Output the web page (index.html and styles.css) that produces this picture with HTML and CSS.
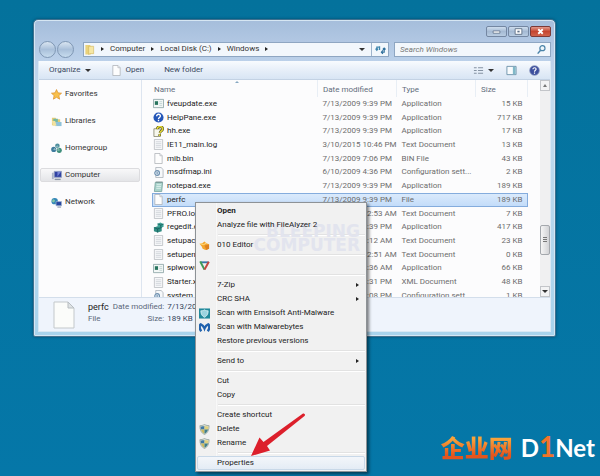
FILE: index.html
```html
<!DOCTYPE html>
<html lang="en">
<head>
    <meta charset="utf-8">
    <title>Windows</title>
    <link rel="stylesheet" href="styles.css">
</head>
<body>
    <!-- Shared icons -->
    <svg class="sprite" aria-hidden="true">
        <symbol id="i-page" viewBox="0 0 12 12"><path d="M2 .5h5.5L10 3v8.500H2z" fill="#fdfdfd" stroke="#a9adb2" stroke-width=".8"/><path d="M7.500.5V3H10" fill="#e6e9ec" stroke="#a9adb2" stroke-width=".6"/></symbol>
        <symbol id="i-text" viewBox="0 0 12 12"><path d="M1.500.5h9v11h-9z" fill="#f6f7f9" stroke="#b4b8bd" stroke-width=".8"/><path d="M3 3h6M3 5h6M3 7h6M3 9h6" stroke="#c9ced5" stroke-width=".8"/></symbol>
        <symbol id="i-ini" viewBox="0 0 12 12"><path d="M3 .5h6L11 3v8.500H3z" fill="#f6f8fa" stroke="#a3aab2" stroke-width=".8"/><circle cx="4.500" cy="6.500" r="2.600" fill="#dbe7f1" stroke="#6f91b0" stroke-width="1.200"/><circle cx="4.500" cy="6.500" r=".8" fill="#4b749a"/></symbol>
        <symbol id="i-app" viewBox="0 0 12 12"><path d="M.5 1.500h11v9H.5z" fill="#f2f7f6" stroke="#8ba3a5" stroke-width=".9"/><path d="M2 3.500h3.500v4H2z" fill="#28745e"/><path d="M7 4h3M7 6h3M7 8h3" stroke="#b7c9c9" stroke-width=".8"/></symbol>
        <symbol id="i-shield" viewBox="0 0 12 12"><path d="M6 .5c2 1.200 3.500 1.300 5 1.300 0 5-1.500 8-5 9.700C2.500 9.800 1 6.800 1 1.800c1.500 0 3-.1 5-1.300z" fill="#dfe4dc" stroke="#8b9a92" stroke-width=".8"/><path d="M6 1.800V6H2.100C1.800 5 1.800 4 1.800 2.600 3.500 2.600 4.500 2.500 6 1.800z" fill="#3f78a6"/><path d="M6 1.800V6h3.900c.3-1 .3-2 .3-3.400C8.500 2.600 7.500 2.500 6 1.800z" fill="#e0d07c"/><path d="M6 6v4.600C4 9.500 2.700 8 2.100 6z" fill="#cdb95d"/><path d="M6 6v4.600C8 9.500 9.300 8 9.900 6z" fill="#3f7e8c"/></symbol>
    </svg>

    <main class="desktop">
        <section class="window">
            <div class="titlebar">
                <button class="caption" aria-label="Minimize"><svg viewBox="0 0 8 6"><path d="M1 2.500h6v2H1z" fill="#fff" stroke="#5d6f86" stroke-width=".7"/></svg></button>
                <button class="caption" aria-label="Maximize"><svg viewBox="0 0 8 6"><path d="M1 .5h6v5H1z" fill="#fff" stroke="#5d6f86" stroke-width=".8"/><path d="M3 2.300h2v1.500H3z" fill="#5d6f86"/></svg></button>
                <button class="caption close" aria-label="Close"><svg viewBox="0 0 8 6"><path d="M2 1l4 4M6 1L2 5" stroke="#fff" stroke-width="1.600"/></svg></button>
            </div>

            <div class="navbar">
                <button class="round" aria-label="Back"></button>
                <button class="round" aria-label="Forward"></button>
                <nav class="address">
                    <svg class="icon" viewBox="0 0 12 12"><path d="M1.500 1h5l1 1.500v9h-6z" fill="#ead27a"/><path d="M5 2.500h5.500v8H6.500L5 11.500z" fill="#f6e7a4" stroke="#d0b152" stroke-width=".6"/></svg>
                    <i class="arrow"></i>
                    <a href="#">Computer</a><i class="arrow"></i>
                    <a href="#">Local Disk (C:)</a><i class="arrow"></i>
                    <a href="#">Windows</a><i class="arrow"></i>
                    <button class="history" aria-label="Previous locations"><i class="arrow down"></i></button>
                    <button class="refresh" aria-label="Refresh"><svg class="icon" viewBox="0 0 12 12"><path d="M2 6V3.500h3M5 6.500V2.500M3.500 5L2 6.800.6 5" fill="none" stroke="#3f86ad" stroke-width="1.300"/><path d="M10 5.500V9H7M8.600 7L7 9l1.600 1.800M8.500 6L10 4.500 11.500 6" fill="none" stroke="#2e6f9c" stroke-width="1.300"/></svg></button>
                </nav>
                <label class="search">
                    <input type="search" placeholder="Search Windows" aria-label="Search Windows">
                    <svg class="icon" viewBox="0 0 12 12"><circle cx="7" cy="4.500" r="2.800" fill="#eef6fb" stroke="#4a83a8" stroke-width="1.300"/><path d="M5 6.800L1.800 10.500" stroke="#4a83a8" stroke-width="1.600"/></svg>
                </label>
            </div>

            <div class="client">
                <div class="toolbar">
                    <button>Organize <i class="arrow down"></i></button>
                    <button class="open"><svg class="icon" viewBox="0 0 12 12"><use href="#i-page"/></svg>Open</button>
                    <button>New folder</button>
                    <button class="view" aria-label="Change your view"><svg class="icon" viewBox="0 0 12 12"><path d="M1 3h3M1 6h3M1 9h3M5.500 3H11M5.500 6H11M5.500 9H11" stroke="#8593a3" stroke-width="1.200"/></svg><i class="arrow down"></i></button>
                    <button aria-label="Preview pane"><svg class="icon" viewBox="0 0 12 12"><path d="M1 1.500h10v9H1z" fill="#f8fbfd" stroke="#6c93ab"/><path d="M7.500 2h3v8h-3z" fill="#80b8c8"/></svg></button>
                    <button aria-label="Help"><svg class="icon" viewBox="0 0 12 12"><circle cx="6" cy="6" r="5.300" fill="#3c4f9e" stroke="#8d99c0" stroke-width=".8"/><path d="M4.300 4.700c0-2.400 3.600-2.200 3.400 0C7.600 5.800 6 5.900 6 7.300M6 8.300v1.300" fill="none" stroke="#fff" stroke-width="1.300"/></svg></button>
                </div>

                <div class="panes">
                    <nav class="sidebar">
                        <a href="#"><svg class="icon" viewBox="0 0 12 12"><path d="M6 .6l1.600 3.600 3.900.4-2.900 2.600.8 3.900L6 9.100l-3.400 2 .8-3.900L.5 4.600l3.900-.4z" fill="#f8c04b" stroke="#dd9330" stroke-width=".8"/></svg>Favorites</a>
                        <a href="#"><svg class="icon" viewBox="0 0 12 12"><path d="M1 2h4l1 1.500h4V10H1z" fill="#e6cc75"/><path d="M2.500 3h5v4h-5z" fill="#76b8a0"/><path d="M4.500 6.500h7V11h-7z" fill="#8fc2d9"/><path d="M1 5.500h3.500L6 10.500H2z" fill="#f2e2a0"/></svg>Libraries</a>
                        <a href="#"><svg class="icon" viewBox="0 0 12 12"><circle cx="7" cy="3" r="2.500" fill="#4e8f9e"/><circle cx="3" cy="7" r="2.800" fill="#3e7b9d"/><circle cx="9" cy="8" r="2.800" fill="#3f8f7c"/><path d="M7 3L3 7l6 1z" fill="none" stroke="#b5d6d5" stroke-width=".7"/></svg>Homegroup</a>
                        <a href="#" class="active"><svg class="icon" viewBox="0 0 12 12"><path d="M3.500 1.500h8v6.500h-8z" fill="#3042a3" stroke="#9aa7c4" stroke-width=".9"/><path d="M7 2l4 0-4 5z" fill="#7786d6"/><path d="M1 3h2v7H1z" fill="#aab4c8"/><path d="M4 9.500h6.500v1.500H4z" fill="#8893a5"/></svg>Computer</a>
                        <a href="#"><svg class="icon" viewBox="0 0 12 12"><circle cx="4" cy="4.500" r="3.500" fill="#3386b8"/><path d="M2 2.500c2 0 3 1 2 2.500s-2 1-3 0" fill="#83c6a4"/><path d="M5.500 5h6v4.500h-6z" fill="#2746a0" stroke="#9db1cc" stroke-width=".8"/><path d="M7 11h4" stroke="#7788a0"/></svg>Network</a>
                    </nav>

                    <div class="files">
                        <table>
                            <thead>
                                <tr><th class="name">Name</th><th>Date modified</th><th>Type</th><th>Size</th></tr>
                            </thead>
                            <tbody>
                                <tr><td><svg class="icon"><use href="#i-app"/></svg>fveupdate.exe</td><td>7/13/2009 9:39 PM</td><td>Application</td><td>15 KB</td></tr>
                                <tr><td><svg class="icon" viewBox="0 0 12 12"><circle cx="6" cy="6" r="5.500" fill="#2456b8"/><path d="M4 4.500c0-2.800 4.200-2.600 4 0C7.800 6 6 6 6 7.500M6 8.500V10" fill="none" stroke="#fff" stroke-width="1.500"/></svg>HelpPane.exe</td><td>7/13/2009 9:39 PM</td><td>Application</td><td>717 KB</td></tr>
                                <tr><td><svg class="icon" viewBox="0 0 12 12"><path d="M1 3h7v8.500H1z" fill="#f7f7ec" stroke="#77775c" stroke-width=".8"/><path d="M4.500 3.500C5-.5 11-.3 10.500 3.500 10.200 5.500 8 5.500 7.500 7.500M7.300 9v2" fill="none" stroke="#4f4d18" stroke-width="2.800"/><path d="M4.500 3.500C5-.5 11-.3 10.500 3.500 10.200 5.500 8 5.500 7.500 7.500M7.300 9v2" fill="none" stroke="#e3d936" stroke-width="1.600"/></svg>hh.exe</td><td>7/13/2009 9:39 PM</td><td>Application</td><td>17 KB</td></tr>
                                <tr><td><svg class="icon"><use href="#i-text"/></svg>IE11_main.log</td><td>3/10/2015 10:46 PM</td><td>Text Document</td><td>13 KB</td></tr>
                                <tr><td><svg class="icon"><use href="#i-page"/></svg>mib.bin</td><td>7/13/2009 7:06 PM</td><td>BIN File</td><td>43 KB</td></tr>
                                <tr><td><svg class="icon"><use href="#i-ini"/></svg>msdfmap.ini</td><td>6/10/2009 4:36 PM</td><td>Configuration sett...</td><td>2 KB</td></tr>
                                <tr><td><svg class="icon" viewBox="0 0 12 12"><path d="M2.500 1.500h8l-1 10h-8z" fill="#a9d3cb" stroke="#6d9c97" stroke-width=".8"/><path d="M4 4h5M3.800 6h5M3.600 8h5" stroke="#e8f6f3" stroke-width=".8"/><path d="M3 1.200h7.500" stroke="#6c8587"/></svg>notepad.exe</td><td>7/13/2009 9:39 PM</td><td>Application</td><td>189 KB</td></tr>
                                <tr class="selected"><td><svg class="icon"><use href="#i-page"/></svg>perfc</td><td>7/13/2009 9:39 PM</td><td>File</td><td>189 KB</td></tr>
                                <tr><td><svg class="icon"><use href="#i-text"/></svg>PFRO.log</td><td>3/11/2015 12:53 AM</td><td>Text Document</td><td>7 KB</td></tr>
                                <tr><td><svg class="icon" viewBox="0 0 12 12"><path d="M1 6l4-1.500L9.500 6v4L5 11.500 1 10z" fill="#2f8b81"/><path d="M5 2l3-1.500 3.500 1.700v3L8.500 6.500 5 5z" fill="#3ba295"/><path d="M1 6l4 1.500L9.500 6M5 7.500v4M5 2l3.500 1.300 3-1.100M8.500 3.300v3" stroke="#14595a" stroke-width=".8" fill="none"/></svg>regedit.exe</td><td>7/13/2009 9:39 PM</td><td>Application</td><td>417 KB</td></tr>
                                <tr><td><svg class="icon"><use href="#i-text"/></svg>setupact.log</td><td>6/27/2017 9:12 AM</td><td>Text Document</td><td>23 KB</td></tr>
                                <tr><td><svg class="icon"><use href="#i-text"/></svg>setuperr.log</td><td>7/14/2009 12:51 AM</td><td>Text Document</td><td>0 KB</td></tr>
                                <tr><td><svg class="icon"><use href="#i-app"/></svg>splwow64.exe</td><td>2/11/2012 1:36 AM</td><td>Application</td><td>66 KB</td></tr>
                                <tr><td><svg class="icon"><use href="#i-text"/></svg>Starter.xml</td><td>7/13/2009 4:31 PM</td><td>XML Document</td><td>48 KB</td></tr>
                                <tr><td><svg class="icon"><use href="#i-ini"/></svg>system.ini</td><td>6/10/2009 5:08 PM</td><td>Configuration sett...</td><td>1 KB</td></tr>
                            </tbody>
                        </table>
                    </div>
                    <div class="scrollbar">
                        <button aria-label="Scroll up"><i class="arrow up"></i></button>
                        <div class="track"><div class="thumb"></div></div>
                        <button aria-label="Scroll down"><i class="arrow down"></i></button>
                    </div>
                </div>

                <footer class="details">
                    <svg class="preview" viewBox="0 0 22 28"><path d="M1 1h14l6 6v20H1z" fill="#fbfcfa" stroke="#c3c8cb"/><path d="M15 1v6h6z" fill="#dfe3e5" stroke="#b7bdc1"/></svg>
                    <div class="about"><strong>perfc</strong><span>File</span></div>
                    <dl>
                        <dt>Date modified:</dt><dd>7/13/2009 9:39 PM</dd>
                        <dt>Size:</dt><dd>189 KB</dd>
                    </dl>
                </footer>
            </div>

            <div class="menu">
                <div class="watermark">BLEEPING<br>COMPUTER</div>
                <button><b>Open</b></button>
                <button>Analyze file with FileAlyzer 2</button>
                <hr>
                <button><svg class="icon" viewBox="0 0 12 12"><path d="M.5 4l3-.5L6 1.500l2 2 3 1v5l-4 1.500-3-1.500-1-2.500z" fill="#f5a62c"/><path d="M6 6l5-1v4.500L8 10.800z" fill="#dd8020"/><path d="M1 4l4 1 3-1.500" stroke="#fde08c" fill="none"/></svg>010 Editor</button>
                <hr>
                <button aria-label="Compare"><svg class="icon" viewBox="0 0 12 12"><path d="M2 2.500h8.500" stroke="#3b76a8" stroke-width="2"/><path d="M1.300 1.500L6 10.500" stroke="#3e9a57" stroke-width="2.200"/><path d="M10.700 2L6 10.500" stroke="#c4473f" stroke-width="2.200"/></svg></button>
                <hr>
                <button>7-Zip<i class="arrow"></i></button>
                <button>CRC SHA<i class="arrow"></i></button>
                <button><svg class="icon" viewBox="0 0 12 12"><path d="M0 .5h12v11H0z" fill="#21899b"/><path d="M6 2c1.500 1 2.500 1 4 1 0 3.500-1 5.500-4 7.200C3 8.500 2 6.500 2 3c1.500 0 2.500 0 4-1z" fill="#9cd4df" stroke="#e8f7fa" stroke-width=".8"/></svg>Scan with Emsisoft Anti-Malware</button>
                <button><svg class="icon" viewBox="0 0 12 12"><path d="M2.500 10C0 7 .5 3.500 2 2.500c1.500.5 3 2 4 4.500 1-2.500 2.500-4 4-4.500 1.500 1 2 4.500-.5 7.500" fill="none" stroke="#2162ad" stroke-width="2.600"/></svg>Scan with Malwarebytes</button>
                <button>Restore previous versions</button>
                <hr>
                <button>Send to<i class="arrow"></i></button>
                <hr>
                <button>Cut</button>
                <button>Copy</button>
                <hr>
                <button>Create shortcut</button>
                <button><svg class="icon"><use href="#i-shield"/></svg>Delete</button>
                <button><svg class="icon"><use href="#i-shield"/></svg>Rename</button>
                <hr>
                <button class="hot">Properties</button>
                <svg class="pointer" viewBox="0 0 56 46"><path d="M53 1.500c2 0 2.500 1.500 1.500 2.500L17 34l3 4.500L1 44 9.500 25.500l4 4.500z" fill="#dc1f2b"/></svg>
            </div>
        </section>

        <div class="brand"><span class="cn">企业网</span><span class="en">D<em>1</em>Net</span></div>
    </main>
</body>
</html>
```
FILE: styles.css
```css
* {
    box-sizing: border-box;
}

body {
    margin: 0;
    font-family: Roboto, "Noto Sans", sans-serif;
    font-size: 8px;
    line-height: 12px;
    color: #333;
}

button, input {
    font: inherit;
    color: inherit;
    background: none;
    border: 0;
    padding: 0;
    margin: 0;
}

a {
    color: inherit;
    text-decoration: none;
}

.sprite {
    position: absolute;
    width: 0;
    height: 0;
}

.icon {
    width: 11px;
    height: 11px;
    flex: none;
}

.arrow {
    flex: none;
    border: 2px solid transparent;
    border-left: 3px solid #222;
    border-right: 0;
}

.arrow.down {
    border: 3px solid transparent;
    border-top-color: #333;
    border-bottom: 0;
}

.arrow.up {
    border: 2px solid transparent;
    border-bottom: 3px solid #777;
    border-top: 0;
}

.desktop {
    position: relative;
    min-height: 100vh;
    padding: 19px 44px 0 33px;
    background: linear-gradient(#04729c, #0577a8);
}

/* Explorer window */
.window {
    position: relative;
    padding: 0 4px 4px;
    border: 1px solid #41718f;
    border-radius: 5px 5px 2px 2px;
    background: linear-gradient(#a5bddb, #bcd1ea 42px, #c3daee 80px, #a8d3ec);
    box-shadow: inset 0 0 0 1px #d6e6f3, 0 0 3px #024a6c;
}

.titlebar {
    display: flex;
    justify-content: flex-end;
    align-items: flex-end;
    gap: 1px;
    height: 17px;
}

.caption {
    display: flex;
    align-items: center;
    justify-content: center;
    width: 21px;
    height: 11px;
    border: 1px solid #7487a2;
    border-radius: 2px;
    background: linear-gradient(#cfdeee, #a5bad3 50%, #b8cce2);
}

.caption svg {
    width: 9px;
    height: 7px;
}

.caption.close {
    border-color: #7c3a37;
    background: linear-gradient(#e19a8c, #c5452f 50%, #d0634b);
}

.navbar {
    display: flex;
    align-items: center;
    height: 24px;
}

.round {
    width: 17px;
    height: 17px;
    margin-left: 1px;
    border: 1px solid #7f97b4;
    border-radius: 50%;
    background: linear-gradient(#d9e5f1, #a9c0da 50%, #c7dcee);
}

.address, .search {
    display: flex;
    align-items: center;
    height: 15px;
    border: 1px solid #8ea6c2;
    background: #f2f7fc;
}

.address {
    flex: 1;
    gap: 6px;
    margin-left: 9px;
}

.history {
    display: flex;
    margin-left: auto;
}

.refresh {
    display: flex;
    align-items: center;
    justify-content: center;
    width: 17px;
    height: 13px;
    border-left: 1px solid #9fb4cc;
}

.search {
    width: 157px;
    margin-left: 5px;
    padding: 0 3px 0 5px;
}

.search input {
    flex: 1;
    min-width: 0;
    height: 13px;
    font-style: italic;
    outline: 0;
    appearance: none;
}

.search input::placeholder {
    color: #777;
}

.client {
    border: 1px solid #d9e8f4;
    border-top: 0;
    background: #fcfcfd;
}

.toolbar {
    display: flex;
    align-items: center;
    gap: 12px;
    height: 19px;
    padding: 0 10px;
    border-bottom: 1px solid #c3d2e4;
    background: linear-gradient(#f8fbfe, #e7eff9 50%, #d8e5f4);
    color: #3b4a62;
}

.toolbar button {
    display: flex;
    align-items: center;
    gap: 4px;
}

.toolbar .open {
    margin: 0 8px;
}

.toolbar .view {
    margin-left: auto;
}

.panes {
    display: flex;
    height: 217px;
}

.sidebar {
    display: flex;
    flex-direction: column;
    gap: 13px;
    width: 103px;
    padding: 7px 1px;
    border-right: 1px solid #dde5f0;
}

.sidebar a {
    display: flex;
    align-items: center;
    gap: 3px;
    height: 14px;
    padding-left: 10px;
    border: 1px solid transparent;
}

.sidebar .active {
    border-color: #dcdcdf;
    border-radius: 2px;
    background: linear-gradient(#f8f8f9, #e4e5e8);
}

/* File list */
.files {
    flex: 1;
    min-width: 0;
    overflow: hidden;
    padding: 0 12px 0 10px;
}

table {
    width: 100%;
    height: 223px;
    border-collapse: collapse;
    table-layout: fixed;
    white-space: nowrap;
    color: #6d6d6d;
}

th {
    width: 79px;
    height: 17px;
    padding: 2px 5px 0;
    border-right: 1px solid #e8eef5;
    font-weight: normal;
    text-align: left;
    color: #626c7c;
}

th.name {
    position: relative;
    width: auto;
    padding-left: 2px;
}

/* sort marker */
th.name::after {
    content: "";
    position: absolute;
    top: 1px;
    left: 50%;
    border: 2px solid transparent;
    border-top: 0;
    border-bottom-color: #86a8c2;
}

th:last-child {
    width: 52px;
}

td {
    padding: 0 5px;
}

td:first-child {
    padding-left: 1px;
    color: #222;
}

td:last-child {
    text-align: right;
}

td .icon {
    margin-right: 3px;
    vertical-align: middle;
}

.selected {
    background: linear-gradient(#dcebfc, #c1dbf9);
    outline: 1px solid #84acdd;
    outline-offset: -1px;
}

.scrollbar {
    display: flex;
    flex-direction: column;
    width: 10px;
    background: #f0f0f1;
}

.scrollbar button {
    display: flex;
    align-items: center;
    justify-content: center;
    height: 11px;
    border: 1px solid #c3c5c9;
    background: #f3f3f4;
}

.track {
    flex: 1;
    padding-top: 134px;
}

.thumb {
    height: 30px;
    border: 1px solid #a4a8ad;
    border-radius: 2px;
    background: linear-gradient(#777, #777) center 11px / 4px 1px no-repeat,
        linear-gradient(#777, #777) center 13px / 4px 1px no-repeat,
        linear-gradient(#777, #777) center 15px / 4px 1px no-repeat,
        linear-gradient(90deg, #f5f5f5, #d2d3d6);
}

/* Details pane */
.details {
    display: flex;
    gap: 4px;
    height: 34px;
    padding: 3px 14px;
    border-top: 1px solid #d3deeb;
    background: #eff4fc;
    color: #5a6779;
}

.preview {
    width: 22px;
    height: 28px;
    margin-right: 9px;
}

.about {
    display: flex;
    flex-direction: column;
}

.about strong {
    font-size: 9px;
    font-weight: normal;
    color: #222;
}

dl {
    display: grid;
    grid-template-columns: auto auto;
    grid-auto-rows: 12px;
    column-gap: 3px;
    margin: 0;
}

dt {
    text-align: right;
}

dd {
    margin: 0;
    color: #33435a;
}

/* Context menu */
.menu {
    position: absolute;
    top: 182px;
    left: 161px;
    display: flex;
    flex-direction: column;
    width: 172px;
    padding: 1px;
    border: 1px solid #8d9296;
    background: linear-gradient(90deg, #f1f1f1 19px, #e0e0e1 19px, #fff 20px, #f1f1f1 21px);
    box-shadow: 2px 2px 3px rgba(0, 0, 0, 0.5);
    color: #222;
}

.menu button {
    position: relative;
    display: flex;
    align-items: center;
    height: 14px;
    padding: 0 6px 0 20px;
    white-space: nowrap;
}

.menu .icon {
    margin: 0 7px 0 -18px;
}

.menu .arrow {
    margin-left: auto;
}

.menu hr {
    width: 147px;
    height: 2px;
    margin: 2px 0 2px 21px;
    border: 0;
    border-top: 1px solid #e2e2e2;
    border-bottom: 1px solid #fff;
}

.menu .hot {
    border: 1px solid #c8d8e8;
    border-radius: 2px;
    background: linear-gradient(#f3f6fa, #e4ecf5);
    padding-left: 19px;
}

.watermark {
    position: absolute;
    top: 21px;
    right: 6px;
    font: bold 17px/14px "DejaVu Sans", sans-serif;
    text-align: right;
    color: #e2e4ee;
}

.pointer {
    position: absolute;
    right: 60px;
    bottom: 13px;
    width: 56px;
    height: 46px;
}

.brand {
    position: absolute;
    right: 5px;
    bottom: 12px;
    display: flex;
    align-items: center;
    gap: 8px;
    line-height: 32px;
}

.cn {
    font-family: "Noto Sans CJK SC", sans-serif;
    font-size: 24px;
    font-weight: 900;
    background: linear-gradient(#f9a33a 25%, #e4551d 75%);
    background-clip: text;
    color: transparent;
}

.en {
    font-family: Lato, sans-serif;
    font-size: 24px;
    font-weight: bold;
    color: #fff;
}

.en em {
    font-style: normal;
    font-size: 28px;
    color: #f0742a;
}
```
